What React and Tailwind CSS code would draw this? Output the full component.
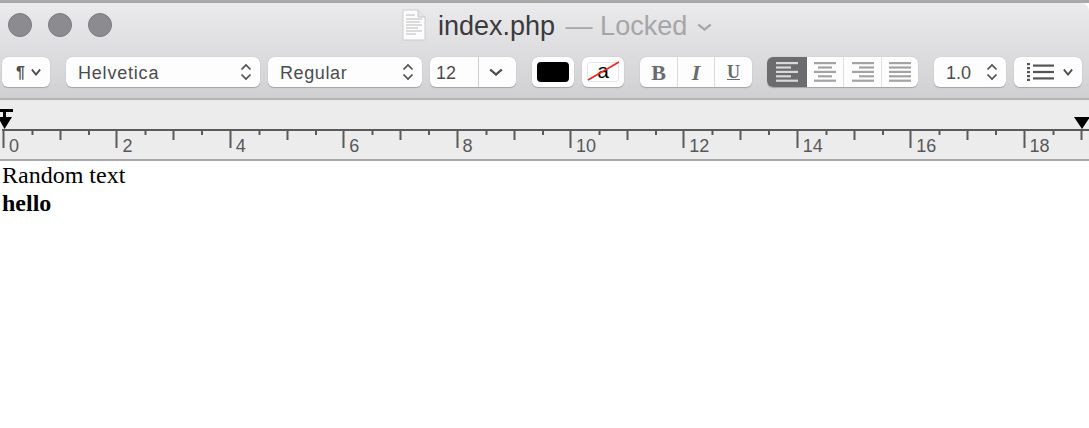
import React from "react";

const labels = [0, 2, 4, 6, 8, 10, 12, 14, 16, 18];
const sans = "font-['Liberation_Sans',Arial,sans-serif]";

function Chevron({ className = "", w = 12 }) {
    return (
        <svg width={w} height="8" viewBox="0 0 12 8" preserveAspectRatio="none" className={className} fill="none" stroke="currentColor" strokeWidth="2">
            <path d="M1 1.5 L6 6.5 L11 1.5" />
        </svg>
    );
}

function Stepper() {
    return (
        <svg width="12" height="18" viewBox="0 0 12 18" className="text-[#4e4e50]" fill="none" stroke="currentColor" strokeWidth="1.7">
            <path d="M1.5 6.5 L6 2 L10.5 6.5" />
            <path d="M1.5 11.5 L6 16 L10.5 11.5" />
        </svg>
    );
}

// one text alignment icon, x/w for each of the 5 lines
function AlignIcon({ lines, color }) {
    return (
        <svg width="24" height="20" viewBox="0 0 24 20" fill={color}>
            {lines.map((l, i) => (
                <rect key={i} x={l[0]} y={i * 4.4} width={l[1]} height="2.2" />
            ))}
        </svg>
    );
}

const btn = "flex items-center h-[30px] bg-[#fdfdfd] rounded-[6px] shadow-[0_0.5px_1px_#a3a2a4] text-[#4c4c4e]";

function Ruler() {
    return (
        <div className="relative h-[61px] bg-[#ececec] border-b-2 border-[#a9a9a9] overflow-hidden">
            <div className="flex pl-[2px] pt-[29px]">
                {labels.map((n) => (
                    <div key={n} className="relative w-[113.4px] h-[29px] shrink-0 border-t-2 border-[#5a5a5a]">
                        <svg width="113.4" height="28" className="block text-[#5a5a5a]" fill="currentColor">
                            <rect x="0.5" y="0" width="2" height="17" />
                            <rect x="29.5" y="0" width="2" height="4" />
                            <rect x="57.5" y="0" width="2" height="9" />
                            <rect x="86" y="0" width="2" height="4" />
                        </svg>
                        <span className={`absolute left-[7px] top-[4px] text-[18px] leading-[22px] text-[#58585a] ${sans}`}>{n}</span>
                    </div>
                ))}
            </div>
            {/* tab stops */}
            <svg width="14" height="20" viewBox="0 0 14 20" className="absolute left-[-1px] top-[9px]">
                <rect x="1" y="0" width="13" height="3" fill="#000" />
                <rect x="4" y="3" width="3" height="5" fill="#000" />
                <path d="M-1 8 H13 L5.5 20 Z" fill="#000" />
            </svg>
            <svg width="16" height="12" viewBox="0 0 16 12" className="absolute left-[1074px] top-[17px]">
                <path d="M0 0 H16 L8 12 Z" fill="#000" />
            </svg>
        </div>
    );
}

export default function App() {
    return (
        <div className={`w-[1089px] h-[428px] bg-white overflow-hidden ${sans}`}>
            <div className="h-[3px] bg-[#a9a9a9]" />
            <div className="h-[97px] rounded-tr-[8px] bg-gradient-to-b from-[#ebeaec] to-[#d0cfd1] border-b-2 border-[#b4b3b5] flex flex-col">
                <div className="h-[54px] flex items-start">
                    <div className="flex gap-4 pl-2 pt-[10px] w-[402px]">
                        <span className="w-6 h-6 rounded-full bg-[#8c8b8f] border border-[#7a797d]" />
                        <span className="w-6 h-6 rounded-full bg-[#8c8b8f] border border-[#7a797d]" />
                        <span className="w-6 h-6 rounded-full bg-[#8c8b8f] border border-[#7a797d]" />
                    </div>
                    <svg width="24" height="32" viewBox="0 0 24 32" className="mt-[6px]">
                        <path d="M1 1 H16 L23 8 V31 H1 Z" fill="#fcfcfc" stroke="#cdcdcd" />
                        <path d="M16 1 V8 H23" fill="#e4e4e4" stroke="#c4c4c4" />
                        <path d="M4 6 H13 M4 10 H20 M4 13 H18 M4 16 H20 M4 19 H16 M4 22 H20 M4 25 H14" stroke="#a8a8a8" strokeWidth="0.8" />
                    </svg>
                    <div className="ml-3 mt-[6px] text-[27px] leading-[34px] whitespace-nowrap text-[#3b3a3c]">
                        index.php<span className="ml-[3px] text-[#a6a5a7]"> — Locked</span>
                    </div>
                    <Chevron w={15} className="ml-[10px] mt-[20px] text-[#a6a5a7]" />
                </div>
                <div className="flex items-center pl-[2px] text-[18px]">
                    <div className={`${btn} w-[48px] pl-[14px] gap-[6px]`}>
                        <span className="text-[16px] font-bold mt-[2px]">¶</span>
                        <Chevron w={10} />
                    </div>
                    <div className={`${btn} w-[194px] ml-4 pl-3 pr-2 justify-between tracking-[0.8px]`}>
                        <span className="mt-[2px]">Helvetica</span>
                        <Stepper />
                    </div>
                    <div className={`${btn} w-[154px] ml-2 pl-3 pr-2 justify-between tracking-[0.6px]`}>
                        <span className="mt-[2px]">Regular</span>
                        <Stepper />
                    </div>
                    <div className={`${btn} w-[86px] ml-2`}>
                        <span className="w-[49px] pl-[6px] pt-[2px] border-r border-[#cfcfd0] h-full flex items-center">12</span>
                        <Chevron w={14} className="ml-[10px]" />
                    </div>
                    <div className={`${btn} w-[42px] ml-4 justify-center`}>
                        <span className="w-8 h-5 bg-black rounded-[4px]" />
                    </div>
                    <div className={`${btn} relative w-[42px] ml-2 justify-center`}>
                        <span className="w-8 h-5 bg-white border border-[#e6e6e6] rounded-[3px] flex items-center justify-center text-[21px] leading-none text-black pb-[3px]">a</span>
                        <svg width="32" height="20" viewBox="0 0 32 20" className="absolute left-[5px] top-[4px]">
                            <path d="M1 19 L32 1" stroke="#f0261a" strokeWidth="1.6" />
                        </svg>
                    </div>
                    <div className={`${btn} w-[112px] ml-4 text-[#6b6b6d] font-['Liberation_Serif',serif] text-[22px]`}>
                        <span className="w-[38px] h-full flex items-center justify-center font-bold border-r border-[#dcdcdd]">B</span>
                        <span className="w-[37px] h-full flex items-center justify-center italic font-bold border-r border-[#dcdcdd]">I</span>
                        <span className="flex-1 h-full flex items-center justify-center font-bold underline text-[18px]">U</span>
                    </div>
                    <div className={`${btn} w-[151px] ml-[15px] overflow-hidden`}>
                        <span className="w-[40px] h-full bg-[#6c6b6d] flex items-center justify-center">
                            <AlignIcon color="#d8d8d8" lines={[[1, 22], [1, 15], [1, 22], [1, 15], [1, 22]]} />
                        </span>
                        <span className="w-[37px] h-full border-r border-[#e0e0e1] flex items-center justify-center">
                            <AlignIcon color="#a3a3a4" lines={[[1, 22], [5, 14], [1, 22], [5, 14], [1, 22]]} />
                        </span>
                        <span className="w-[38px] h-full border-r border-[#e0e0e1] flex items-center justify-center">
                            <AlignIcon color="#a3a3a4" lines={[[1, 22], [8, 15], [1, 22], [8, 15], [1, 22]]} />
                        </span>
                        <span className="flex-1 h-full flex items-center justify-center">
                            <AlignIcon color="#a3a3a4" lines={[[1, 22], [1, 22], [1, 22], [1, 22], [1, 22]]} />
                        </span>
                    </div>
                    <div className={`${btn} w-[72px] ml-4 pl-3 pr-2 justify-between`}>
                        <span className="mt-[2px]">1.0</span>
                        <Stepper />
                    </div>
                    <div className={`${btn} w-[68px] ml-2 pl-[12px] gap-[9px]`}>
                        <svg width="28" height="18" viewBox="0 0 28 18" className="text-[#555557]" fill="currentColor">
                            <rect x="1" y="0" width="3" height="2.2" />
                            <rect x="1" y="4" width="3" height="2.2" />
                            <rect x="1" y="8" width="3" height="2.2" />
                            <rect x="1" y="12" width="3" height="2.2" />
                            <rect x="1" y="15.8" width="3" height="2.2" />
                            <rect x="7" y="1.5" width="21" height="2.2" />
                            <rect x="7" y="7.9" width="21" height="2.2" />
                            <rect x="7" y="14.3" width="21" height="2.2" />
                        </svg>
                        <Chevron w={10} />
                    </div>
                </div>
            </div>
            <Ruler />
            <div className="pl-[2px] font-['Liberation_Serif',serif] text-[24px] leading-[28px] text-black">
                <p>Random text</p>
                <p className="font-bold">hello</p>
            </div>
        </div>
    );
}
